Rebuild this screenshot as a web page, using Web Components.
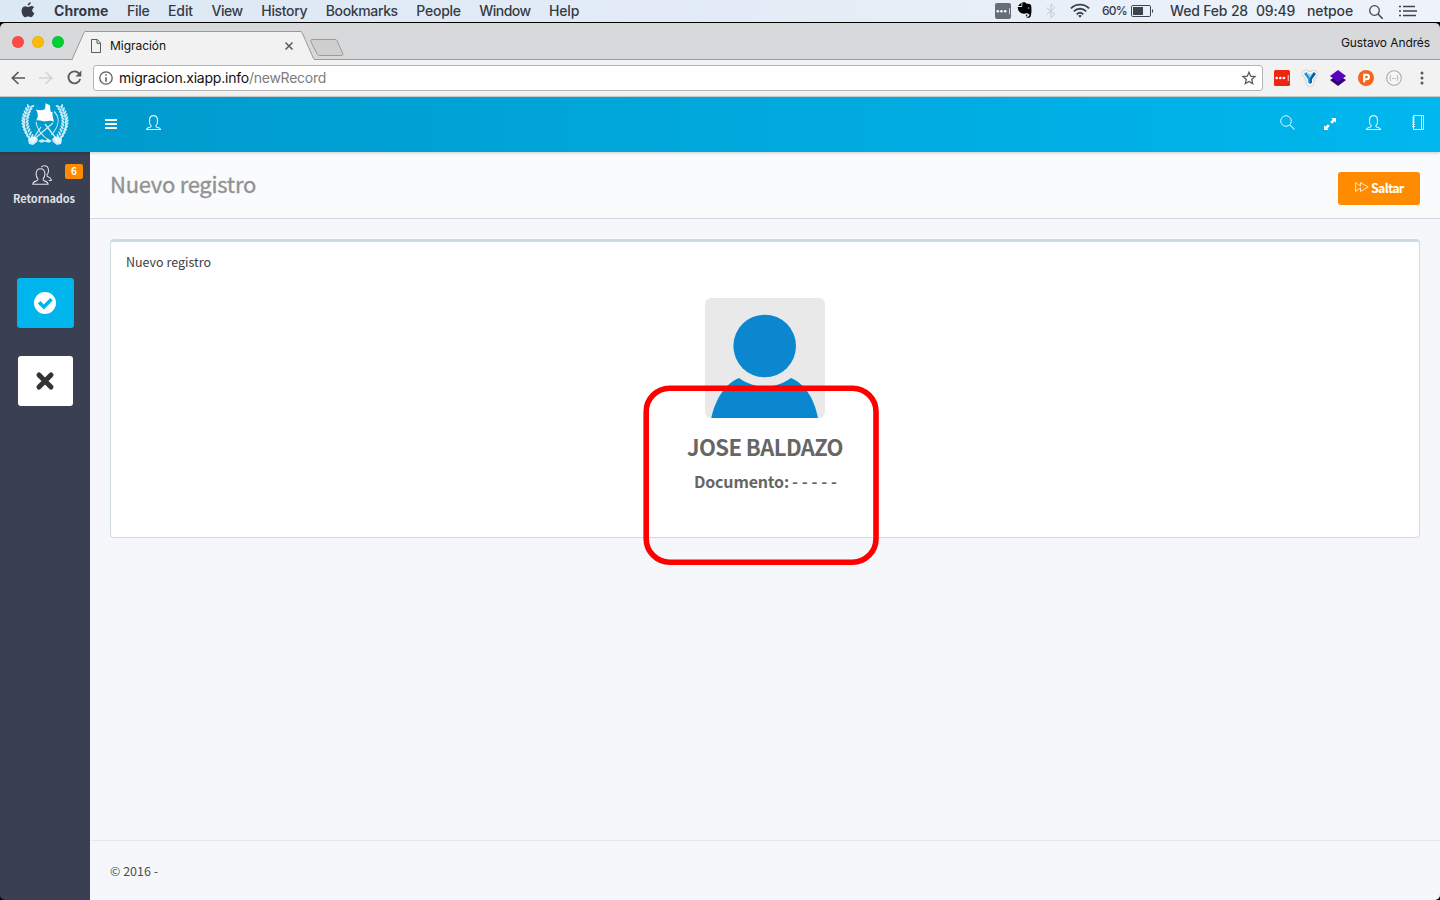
<!DOCTYPE html>
<html lang="es">
<head>
<meta charset="utf-8">
<title>Migración</title>
<style>
html,body{margin:0;height:100%;overflow:hidden;background:#000}
</style>
</head>
<body>
<desktop-screen></desktop-screen>
<script>
const define = (name, html, init) => customElements.define(name, class extends HTMLElement {
  connectedCallback() {
    if (this.shadowRoot) return;
    const t = document.createElement('template');
    t.innerHTML = typeof html === 'function' ? html(this) : html;
    this.attachShadow({mode: 'open'}).append(t.content.cloneNode(true));
    if (init) init(this);
  }
});

const person = '<path d="M5.100 10.600C4 9.700 3.400 8 3.500 6.600L3.700 3.800C4 1.700 5.400.6 7.500.6s3.500 1.100 3.800 3.200l.2 2.800c.1 1.400-.5 3.100-1.600 4-.3 1 .3 1.300 1.300 1.600 2.200.6 3.200.9 3.300 2.300H.5c.1-1.400 1.100-1.700 3.300-2.300 1-.3 1.600-.6 1.300-1.600Z" fill="none" stroke="currentColor" stroke-width="1.1"/>';

/* One laurel branch: pairs of leaves along an arc that bulges outwards. */
const branch = () => {
  let s = '';
  for (let i = 0; i < 12; i++) {
    const y = 37 - i * 3, u = (y - 20) / 18;
    const x = 4 + 6.5 * u * u + (u > 0 ? 1.5 * u : 0);
    const tilt = -u * 28;
    s += `<ellipse cx="${x - 2}" cy="${y - .6}" rx="2.400" ry="1" transform="rotate(${50 + tilt} ${x - 2} ${y - .6})"/>`
       + `<ellipse cx="${x + 2}" cy="${y - .6}" rx="2.400" ry="1" transform="rotate(${-50 + tilt} ${x + 2} ${y - .6})"/>`;
  }
  return s + '<path d="M13 40C2.500 33 0 17 8.500 3" fill="none" stroke="#d5f0fa" stroke-width=".9"/>';
};
const ICONS = {
  apple: ['0 0 14 16', '<path fill="#353c45" d="M9.700.2c.1 1.800-1.400 3.300-3 3.300C6.500 1.900 8 .4 9.700.2ZM12.900 5.400c-2.500 1.500-2.100 4.700.5 5.700-.6 1.700-2 4.100-3.400 4.100-1.100 0-1.500-.6-2.800-.6s-1.700.6-2.800.6C2.500 15.200.6 11.800.6 8.900c0-2.900 1.700-4.700 3.700-4.700 1.300 0 2.200.8 3 .8.800 0 1.900-.9 3.400-.9.900 0 1.700.4 2.200 1.300Z"/>'],
  dots: ['0 0 16 16', '<rect width="16" height="16" rx="2" fill="#676d76"/><g fill="#fff"><circle cx="2.800" cy="8.300" r="1.250"/><circle cx="6.500" cy="8.300" r="1.250"/><circle cx="10.200" cy="8.300" r="1.250"/><path d="M14 5.300h.7v6H14z"/></g>'],
  evernote: ['0 0 15 16', '<path d="M4.500.5v3.600H.9L4.500.5Z"/><path d="M5.300.6c1.500-.7 3.400-.3 3.900.9l3.300.6c1.400.3 1.800 1.500 1.900 3.600.2 3.600 0 7.300-1.100 9.200-.6 1.100-3.900 1-4.300-.5-.4-1.700.4-2.900 1.600-2.900.9 0 1.300.3 1.300.8h-1c-.6 0-.8.4-.8 1 0 .7.600.9 1.300.9.900 0 1.200-.8 1-1.900-.3-1-1.700-.8-2.500-1.500-.5 1.100-2.600.9-4.200.6C2.300 11 1 8.500.7 5h3.500c.8 0 1.100-.3 1.100-1.100V.6Z"/><path d="M10.600 6.200c.2-1 1.800-.8 1.900.3Z" fill="#fff"/><path d="M8.600 12.100h2.500v2.300H9.200" fill="none" stroke="#dfe5ec" stroke-width=".9"/>'],
  bluetooth: ['0 0 10 16', '<path d="m.7 4.700 8 6.600L5 14.800V1l3.700 3.600-8 6.800" fill="none" stroke="#c3c9d0" stroke-width="1"/>'],
  wifi: ['0 0 20 15', '<g fill="none" stroke="#3d434c" stroke-width="1.800"><path d="M.9 5.300c5.200-5 13-5 18.200 0M3.800 8.400c3.600-3.500 8.800-3.500 12.400 0M6.700 11.300c2-1.900 4.600-1.900 6.600 0"/></g><path d="m8.200 12.800 1.800 1.900 1.800-1.900c-1-1-2.600-1-3.600 0Z" fill="#3d434c"/>'],
  battery: ['0 0 23 12', '<rect x=".5" y=".5" width="19" height="11" rx="1.300" fill="none" stroke="#3d434c"/><path d="M2 2h10v8H2z" fill="#3d434c"/><path d="M21 4c1.600.6 1.600 3.400 0 4Z" fill="#3d434c"/>'],
  lens: ['0 0 14 14', '<circle cx="5.500" cy="5.500" r="4.800" fill="none" stroke="#42474f" stroke-width="1.300"/><path d="m9 9 4.700 4.700" stroke="#42474f" stroke-width="1.600"/>'],
  list: ['0 0 18 12', '<path d="M0 1.500h2M4 1.500h12M0 6h2M4 6h14M0 10.500h2M4 10.500h13" stroke="#3d434c" stroke-width="1.700"/>'],
  page: ['0 0 10 14', '<path d="M.5.500h5.700l3.300 3.500v9.500h-9zM6 .6V4.300h3.500" fill="none" stroke="#5a5a5a"/>'],
  x: ['0 0 8 8', '<path d="m.5.500 7 7M7.500.5l-7 7" stroke="#5a5a5a" stroke-width="1.500"/>'],
  back: ['0 0 14 14', '<path d="M14 7H1.500M7.500 1 1.300 7l6.200 6" fill="none" stroke="currentColor" stroke-width="1.700"/>'],
  reload: ['0 0 15 15', '<path d="M12 3.400A6 6 0 1 0 13.200 9" fill="none" stroke="#5a5a5a" stroke-width="1.800"/><path d="M14.300.5v6H8.500Z" fill="#5a5a5a"/>'],
  info: ['0 0 14 14', '<circle cx="7" cy="7" r="6.200" fill="none" stroke="#5a5a5a" stroke-width="1.300"/><path d="M7 6.200v4.600M7 3.300v1.500" stroke="#5a5a5a" stroke-width="1.500"/>'],
  star: ['0 0 14 14', '<path d="m7 1.200 1.700 4 4.300.4-3.300 2.900 1 4.200L7 10.500l-3.700 2.200 1-4.200L1 5.600l4.300-.4z" fill="none" stroke="#5a5a5a" stroke-width="1.300"/>'],
  extdots: ['0 0 16 16', '<rect width="16" height="16" rx="1.500" fill="#ed2613"/><g fill="#fff"><circle cx="2.700" cy="8" r="1.350"/><circle cx="6.300" cy="8" r="1.350"/><circle cx="9.900" cy="8" r="1.350"/><path d="M13.800 5h.8v6h-.8z"/></g>'],
  ygem: ['0 0 16 16', '<path d="M1.300 3.500 4 1.300l4 2 4-2 2.700 2.200-4 6-.5 4.300L8 15.300l-2.200-1.500-.5-4.300z" fill="#fff" stroke="#fff" stroke-width="1.500" stroke-linejoin="round" style="filter:drop-shadow(0 0 1px #0005)"/><path d="M2 3.800 4.200 2 8 6.300V14l-1.900-1.200V9.500z" fill="#1b98dc"/><path d="M14 3.800 11.800 2 8 6.300V14l1.900-1.200V9.500z" fill="#0a5c9e"/><path d="M4.200 2 8 4.200 11.800 2 8 8z" fill="#8fdaf7"/>'],
  layers: ['0 0 16 16', '<path d="m0 10 8-5 8 5-8 6z" fill="#300075"/><path d="m0 6 8-6 8 6-8 6z" fill="#5c00bd"/>'],
  pdisc: ['0 0 16 16', '<circle cx="8" cy="8" r="8" fill="#f3661d"/><path d="M6.200 12.200V4.800h2.500a2.200 2.200 0 0 1 0 4.400H6.200" fill="none" stroke="#fff" stroke-width="2.100"/>'],
  braces: ['0 0 16 16', '<circle cx="8" cy="8" r="7.300" fill="#f7f7f7" stroke="#aaa" stroke-width="1.100"/><path d="M5.300 5c-1.300 0-.8 1-.8 2 0 .6-.4 1-1 1 .6 0 1 .4 1 1 0 1-.5 2 .8 2M10.700 5c1.300 0 .8 1 .8 2 0 .6.4 1 1 1-.6 0-1 .4-1 1 0 1 .5 2-.8 2" fill="none" stroke="#aaa" stroke-width=".8"/><path d="M6 8.600h4.500" stroke="#aaa" stroke-width="1" stroke-dasharray="1 .6"/>'],
  kebab: ['0 0 4 14', '<g fill="#5a5a5a"><circle cx="2" cy="2.100" r="1.500"/><circle cx="2" cy="7" r="1.500"/><circle cx="2" cy="11.900" r="1.500"/></g>'],
  crest: ['0 0 48 43', `<g fill="#cdeefa">${branch()}<g transform="translate(48 0) scale(-1 1)">${branch()}</g></g><g fill="none" stroke="#c9edfa"><path d="M12 36 20 24M37 38 24 21M34 36 40 40M11 38 32 20" stroke-width="1.300"/><path d="M33 8.500c6 5.500 5.500 14-2.500 23.500M15 19c1 8 6 14 14 19" stroke-width="1.100"/></g><path d="M14.700 6.500c3 1 5.500 1 8 .3C25.500 5.500 23.500 1.500 25 .2L29 2.500 29.500 8.500l2 .8c-.3 3 .4 5.500 1.600 9.500-3.500-1.500-5.500-1-8.500-.5-3 .6-5.500-1.800-9.800-.8 3-3.500 2.500-7.500-.1-11Z" fill="#fff"/><path d="m7 37 3-3 4-.5 3 2.500-1 3-4 3-4-1zM41 37l-3-3-4-.5-3 2.500 1 3 4 3 4-1zM17 38l4-2 3 1.500L27 36l4 2-3 1.700-4-1-4 1z" fill="#f2fbff" opacity=".85"/>`],
  bars: ['0 0 12 10', '<path d="M0 1h12M0 5h12M0 9h12" stroke="#fff" stroke-width="2"/>'],
  person: ['0 0 15 15', person],
  people: ['0 0 20 20', '<g fill="none" stroke="#dfe0e5" stroke-width="1.100"><path d="M5.900 13.800C4.700 12.600 4 10.800 4.100 8.900 4.200 5.600 5.600 3.700 8.500 3.700s4.300 1.900 4.400 5.200c.1 1.900-.6 3.700-1.800 4.900-.3 1.600.5 1.900 1.800 2.300 2.100.6 3.100 1.300 3.200 3.200H.8c.1-1.900 1.100-2.600 3.200-3.200 1.300-.4 2.200-.7 1.900-2.300Z"/><path d="M9.200 2.300c.7-1 1.900-1.600 3.200-1.600 2.600 0 4 1.700 4.100 4.700.1 1.800-.5 3.500-1.600 4.500-.3 1.500.4 1.800 1.600 2.200 1.900.6 2.700 1.400 2.900 3.400h-2.600"/></g>'],
  search: ['0 0 15 15', '<circle cx="6" cy="6" r="5.300" fill="none" stroke="#d8f4fd"/><path d="m9.800 9.800 4.600 4.600" stroke="#d8f4fd" stroke-width="1.100"/>'],
  expand: ['0 0 12 12', '<path d="M12 0v4.700l-1.400-1.400-2.500 2.500-1.900-1.900 2.500-2.500L7.300 0zM0 12V7.300l1.400 1.400 2.500-2.500 1.900 1.900-2.500 2.500L4.700 12z" fill="#fff"/>'],
  book: ['0 0 12 15', '<path d="M1.500.5h10v14h-10ZM9.500.5v14" fill="none" stroke="#e1f6fd"/><path d="M0 2.700h3M0 4.900h3M0 7.100h3M0 9.300h3M0 11.500h3" stroke="#e1f6fd" stroke-width=".9"/>'],
  check: ['0 0 22 22', '<circle cx="11" cy="11" r="11" fill="#fff"/><path d="m5.100 10.200 4.700 4.800 7.700-7.700" fill="none" stroke="#00b5ec" stroke-width="3.600"/>'],
  times: ['0 0 18 18', '<path d="m3 3 12 12M15 3 3 15" stroke="#333" stroke-width="5" stroke-linecap="round"/>'],
  forward: ['0 0 14 10', '<path d="M.6.600 5.500 4V.6L13.200 5 5.500 9.400V6L.6 9.400Z" fill="none" stroke="#fff0dc" stroke-width=".9"/>'],
  avatar: ['0 0 120 120', '<rect width="120" height="120" rx="6" fill="#e9e9e9"/><circle cx="59.700" cy="48" r="31.300" fill="#0b87d0"/><path d="M6.300 120C10 103 19 86 34 80c16 11.500 36 11.500 52 0 15 6 24 23 27 40Z" fill="#0b87d0"/>'],
  tab: ['0 0 244 29', '<path d="M0 28.500 12 1.500Q12.600.5 14 .5H228Q229.400.5 230 1.500L242 28.500" fill="#f2f2f2" stroke="#98989a"/><path d="M1 28.500H242" stroke="#f2f2f2"/>'],
  newtab: ['0 0 34 17', '<path d="M1.800.5H25q1.500 0 2 1.200L32.800 14.500q.7 2-1 2H9.300q-1.500 0-2-1.200L.8 2.500Q.3.500 1.800.5Z" fill="#cfcfcf" stroke="#9b9b9c"/>']
};

define('ui-icon', h => {
  const [box, art] = ICONS[h.getAttribute('name')];
  const [, , w, hh] = box.split(' ');
  return `<style>:host{display:block;flex:none;width:${w}px;height:${hh}px}svg{display:block;overflow:visible}</style><svg width="${w}" height="${hh}" viewBox="${box}">${art}</svg>`;
});

/* A single-line label whose tracking is set so that it spans a given width. */
define('fit-text', h => `<style>:host{display:block;flex:none;white-space:pre;width:${h.getAttribute('w')}px}span{display:inline-block}</style><span><slot></slot></span>`, h => {
  const s = h.shadowRoot.querySelector('span');
  const n = [...h.textContent].length;
  s.style.letterSpacing = ((+h.getAttribute('w') - s.getBoundingClientRect().width) / n) + 'px';
});

define('mac-menubar', `<style>
:host{display:flex;align-items:flex-start;height:22px;background:linear-gradient(90deg,#dce8f4,#e3ecf6 50%,#eef3fb);font:500 14px/22px Inter,sans-serif;color:#353b45;box-sizing:border-box;padding-left:20.500px}
fit-text{margin-left:18.500px}fit-text.app{font-weight:700;margin-left:19.500px}
.gap{flex:1}
</style>
<ui-icon name="apple" style="margin-top:2px"></ui-icon>
<fit-text class="app" w="54.500">Chrome</fit-text><fit-text w="22.500">File</fit-text><fit-text w="25">Edit</fit-text><fit-text w="31.300">View</fit-text><fit-text w="46">History</fit-text><fit-text w="72">Bookmarks</fit-text><fit-text w="44.500">People</fit-text><fit-text w="51.300">Window</fit-text><fit-text w="30">Help</fit-text>
<span class="gap"></span>
<ui-icon name="dots" style="margin:3px 6px 0 0"></ui-icon>
<ui-icon name="evernote" style="margin:2px 14px 0 0"></ui-icon>
<ui-icon name="bluetooth" style="margin:3px 14px 0 0"></ui-icon>
<ui-icon name="wifi" style="margin:3px 12px 0 0"></ui-icon>
<fit-text w="25" style="margin:0 4px 0 0;font-size:12px">60%</fit-text>
<ui-icon name="battery" style="margin:5px 16px 0 0"></ui-icon>
<fit-text w="78" style="margin:0 8px 0 0">Wed Feb 28</fit-text>
<fit-text w="39" style="margin:0 12px 0 0">09:49</fit-text>
<fit-text w="46" style="margin:0 16px 0 0">netpoe</fit-text>
<ui-icon name="lens" style="margin:5px 16px 0 0"></ui-icon>
<ui-icon name="list" style="margin:5px 23px 0 0"></ui-icon>`);

define('tab-strip', `<style>
:host{display:flex;height:37px;box-sizing:border-box;border-bottom:1px solid #98989a;background:#d8d9db;border-radius:5px 5px 0 0;padding-left:12px;font:12px/18px Inter,sans-serif;color:#111}
i{box-sizing:border-box;width:12px;height:12px;border-radius:50%;margin:13px 8px 0 0;border:1px solid #0001}
.tab{display:grid;height:29px;margin:8px -5px 0 0}.tab>*{grid-area:1/1}
.row{display:flex;align-items:center;padding:0 19px 0 19px;height:29px;box-sizing:border-box;width:240px}
</style>
<i style="background:#ff4b47"></i><i style="background:#fdbc09"></i><i style="background:#00d034"></i>
<div class="tab"><ui-icon name="tab"></ui-icon><div class="row"><ui-icon name="page"></ui-icon><fit-text w="56" style="margin:0 auto 0 9px">Migración</fit-text><ui-icon name="x"></ui-icon></div></div>
<ui-icon name="newtab" style="margin:16px 0 0 -1px"></ui-icon>
<fit-text w="89" style="margin:11px 10px 0 auto;">Gustavo Andrés</fit-text>`);

define('tool-bar', `<style>
:host{display:flex;align-items:center;height:37px;box-sizing:border-box;border-bottom:1px solid #cfcfcf;background:#f2f2f2;padding:0 16px 1px 11px;color:#5a5a5a}
.url{display:flex;align-items:center;width:1170px;height:26px;box-sizing:border-box;border:1px solid #b5b5b5;border-radius:3px;background:#fff;padding:0 6px 0 5px;font:14px/24px Inter,sans-serif;color:#111}
</style>
<ui-icon name="back"></ui-icon><ui-icon name="back" style="color:#d4d4d4;transform:scaleX(-1);margin:0 14px"></ui-icon><ui-icon name="reload"></ui-icon>
<div class="url" style="margin:0 11px"><ui-icon name="info"></ui-icon><fit-text w="130" style="margin-left:6px">migracion.xiapp.info</fit-text><fit-text w="77" style="color:#7d7d7d">/newRecord</fit-text><ui-icon name="star" style="margin-left:auto"></ui-icon></div>
<ui-icon name="extdots"></ui-icon><ui-icon name="ygem" style="margin:0 12px"></ui-icon><ui-icon name="layers"></ui-icon><ui-icon name="pdisc" style="margin:0 12px"></ui-icon><ui-icon name="braces"></ui-icon><ui-icon name="kebab" style="margin-left:18px"></ui-icon>`);

define('app-header', `<style>
:host{display:flex;height:55px;background:linear-gradient(90deg,#0099cb,#00b7ee);color:#e5f7fd;box-shadow:0 1px 3px #0003;position:relative;z-index:1;padding-left:21px}
</style>
<ui-icon name="crest" style="margin:6px 36px 0 0"></ui-icon>
<ui-icon name="bars" style="margin:22px 29px 0 0"></ui-icon>
<ui-icon name="person" style="margin:18px auto 0 0"></ui-icon>
<ui-icon name="search" style="margin:18px 29px 0 0"></ui-icon>
<ui-icon name="expand" style="margin:21px 30px 0 0"></ui-icon>
<ui-icon name="person" style="margin:18px 31px 0 0"></ui-icon>
<ui-icon name="book" style="margin:18px 16px 0 0"></ui-icon>`);

define('side-bar', `<style>
:host{display:flex;flex-direction:column;align-items:center;width:90px;flex:none;background:#3a3f51;color:#dfe1e8;font:bold 11px/16px "Noto Sans CJK SC",sans-serif;position:relative}
.badge{position:absolute;left:65px;top:12px;width:18px;height:15px;border-radius:2px;background:#ff8c00;color:#fff;font-size:10px;line-height:13px;text-align:center}
button{display:grid;place-items:center;box-sizing:border-box;height:50px;border:0;border-radius:3px;padding:0}
.ok{width:57px;background:#00b5ec;margin-top:72px}.no{width:55px;background:#fff;margin-top:28px}
</style>
<ui-icon name="people" style="margin:13px 7px 0 0"></ui-icon><span class="badge">6</span>
<fit-text w="62" style="margin:4px 2px 0 0;padding-top:1px">Retornados</fit-text>
<button class="ok"><ui-icon name="check"></ui-icon></button>
<button class="no"><ui-icon name="times"></ui-icon></button>`);

define('page-head', `<style>
:host{display:flex;justify-content:space-between;height:67px;box-sizing:border-box;border-bottom:1px solid #cfdbe2;background:#fafbfd;padding:0 20px;color:#929292;font:22px/32px "Noto Sans CJK SC",sans-serif}
.title{margin-top:15px;-webkit-text-stroke:.35px #929292}
.go{display:flex;box-sizing:border-box;width:82px;height:33px;margin-top:20px;border-radius:3px;background:#ff8c00;color:#fff;font-weight:bold;font-size:12.500px;line-height:32px;padding-left:17px}
</style>
<fit-text class="title" w="146">Nuevo registro</fit-text>
<div class="go"><ui-icon name="forward" style="margin:10px 2px 0 0"></ui-icon><fit-text w="32.500">Saltar</fit-text></div>`);

define('record-card', `<style>
:host{display:block;box-sizing:border-box;height:299px;border:1px solid #cfdbe2;border-top-width:3px;border-radius:4px;background:#fff;margin:20px 20px 0;font:12.500px/20px "Noto Sans CJK SC",sans-serif;color:#404040}
.who{display:flex;flex-direction:column;align-items:center;color:#666;font-weight:bold}
.doc{display:flex;margin-top:6px;font-size:16px;line-height:26px}
</style>
<fit-text w="85" style="margin:10px 0 0 15px">Nuevo registro</fit-text>
<div class="who"><ui-icon name="avatar" style="margin-top:26px"></ui-icon>
<fit-text w="156" style="margin-top:12px;font-size:22px;line-height:32px">JOSE BALDAZO</fit-text>
<div class="doc"><fit-text w="95" style="margin-left:1px">Documento:</fit-text><fit-text w="45" style="margin-left:3px">- - - - -</fit-text></div></div>`);

define('page-foot', `<style>
:host{display:block;height:60px;box-sizing:border-box;border-top:1px solid #e4eaec;margin-top:auto;padding:20px 20px 0;font:12.500px/20px "Noto Sans CJK SC",sans-serif;color:#505050}
</style><fit-text w="48">© 2016 -</fit-text>`);

define('focus-frame', `<style>:host{display:block;position:absolute;left:643px;top:385px;width:236px;height:180px;z-index:3}svg{display:block}</style><svg width="236" height="180"><rect x="3.200" y="3.200" width="229.800" height="174" rx="23.500" fill="none" stroke="#f00" stroke-width="5.600"/></svg>`);

define('desktop-screen', `<style>
:host{display:flex;flex-direction:column;width:1440px;height:900px;background:#000;position:relative;overflow:hidden}
tab-strip{margin-top:1px}
.body{display:flex;flex:1;border-radius:0 0 5px 5px;overflow:hidden}
main{display:flex;flex-direction:column;flex:1;background:#f5f7fb}
</style>
<mac-menubar></mac-menubar><tab-strip></tab-strip><tool-bar></tool-bar><app-header></app-header>
<div class="body"><side-bar></side-bar><main><page-head></page-head><record-card></record-card><page-foot></page-foot></main></div>
<focus-frame></focus-frame>`);
</script>
</body>
</html>
